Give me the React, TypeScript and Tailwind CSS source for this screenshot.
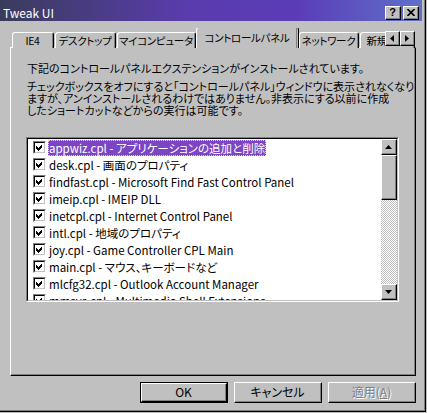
import React from 'react';

const rows = [
  'appwiz.cpl - アプリケーションの追加と削除',
  'desk.cpl - 画面のプロパティ',
  'findfast.cpl - Microsoft Find Fast Control Panel',
  'imeip.cpl - IMEIP DLL',
  'inetcpl.cpl - Internet Control Panel',
  'intl.cpl - 地域のプロパティ',
  'joy.cpl - Game Controller CPL Main',
  'main.cpl - マウス、キーボードなど',
  'mlcfg32.cpl - Outlook Account Manager',
  'mmsys.cpl - Multimedia Shell Extensions',
];

const Raised: React.FC<{ className?: string; children?: React.ReactNode }> = ({ className = '', children }) => (
  <div className={`border-t border-l border-white border-r border-b border-r-black border-b-black bg-[#c0c0c0] ${className}`}>
    <div className="w-full h-full border-r border-b border-[#808080] flex items-center justify-center">{children}</div>
  </div>
);

const Check: React.FC = () => (
  <div className="w-[13px] h-[13px] shrink-0 border-t border-l border-[#808080] border-r border-b border-r-white border-b-white">
    <div className="w-full h-full border-t border-l border-black border-r border-b border-r-[#c0c0c0] border-b-[#c0c0c0] bg-white flex items-center justify-center">
      <svg width="7" height="7" viewBox="0 0 7 7" shapeRendering="crispEdges">
        <path d="M0 2 L2 4 L6 0 L6 3 L2 7 L0 5 Z" fill="#000" />
      </svg>
    </div>
  </div>
);

const Tri: React.FC<{ dir: 'up' | 'down' | 'left' | 'right' }> = ({ dir }) => {
  const pts = {
    up: '0,4 7,4 3.5,0',
    down: '0,0 7,0 3.5,4',
    left: '4,0 4,7 0,3.5',
    right: '0,0 0,7 4,3.5',
  }[dir];
  const horiz = dir === 'up' || dir === 'down';
  return (
    <svg width={horiz ? 7 : 4} height={horiz ? 4 : 7} viewBox={horiz ? '0 0 7 4' : '0 0 4 7'}>
      <polygon points={pts} fill="#000" />
    </svg>
  );
};

const tabs = [
  { label: 'IE4', w: 'w-[42px]' },
  { label: 'デスクトップ', w: 'w-[61px]' },
  { label: 'マイコンピュータ', w: 'w-[79px]' },
  { label: 'コントロールパネル', w: 'w-[99px]', active: true },
  { label: 'ネットワーク', w: 'w-[60px]' },
  { label: '新規作成', w: 'w-[55px]' },
];

const App: React.FC = () => {
  return (
    <div className="w-[427px] h-[413px] bg-[#c0c0c0] overflow-hidden text-black text-[11px] font-['Noto_Sans_CJK_JP',sans-serif] [font-feature-settings:'palt'] leading-[12px]">
      <div className="w-[426px] h-[412px] border-r border-b border-black">
        <div className="w-full h-full border-r border-b border-[#808080] flex flex-col">
          {/* title bar */}
          <div className="h-[21px] mr-[2px] flex bg-[linear-gradient(90deg,#3a3c5c_0%,#5a3cae_45%,#5a3cb8_70%,#6070c8_100%)]">
            <div className="pl-[3px] pt-[7px] text-white text-[12px]">Tweak UI</div>
            <div className="ml-auto flex items-end pb-[1px] pr-[3px] gap-[2px]">
              <Raised className="w-[16px] h-[14px]">
                <span className="text-[11px] font-bold leading-[11px] font-['Liberation_Sans',sans-serif]">?</span>
              </Raised>
              <Raised className="w-[16px] h-[14px]">
                <svg width="8" height="7" viewBox="0 0 8 7">
                  <path d="M0.5 0 L7.5 7 M7.5 0 L0.5 7" stroke="#000" strokeWidth="1.6" />
                </svg>
              </Raised>
            </div>
          </div>

          {/* tabs + panel */}
          <div className="pl-[10px] pr-[8px] mt-[7px] flex flex-col">
            <div className="relative z-10 h-[20px] -mb-[1px] flex items-end gap-[1px] pl-[2px] overflow-hidden text-[10.5px] tracking-[-0.3px]">
              {tabs.map((t) => (
                <div
                  key={t.label}
                  className={`${t.w} shrink-0 ${t.active ? 'h-[20px] -mx-[1px] px-[1px] box-content' : 'h-[16px]'} border-t border-l border-white border-r border-r-black rounded-t-[3px] bg-[#c0c0c0] flex`}
                >
                  <div className="flex-1 border-r border-[#808080] flex items-center justify-center whitespace-nowrap overflow-hidden">
                    {t.label}
                  </div>
                </div>
              ))}
              <div className="absolute right-[1px] top-[3px] flex bg-[#c0c0c0]">
                <Raised className="w-[15px] h-[15px]"><Tri dir="left" /></Raised>
                <Raised className="w-[15px] h-[15px]"><Tri dir="right" /></Raised>
              </div>
            </div>

            <div className="h-[329px] border-t border-l border-white border-r border-b border-r-black border-b-black">
              <div className="w-full h-full border-r border-b border-[#808080] pl-[16px] pt-[14px] flex flex-col">
                <p className="whitespace-nowrap">下記のコントロールパネルエクステンションがインストールされています。</p>
                <p className="mt-[6px] leading-[12px] whitespace-nowrap">
                  チェックボックスをオフにすると「コントロールパネル」ウィンドウに表示されなくなり
                  <br />
                  ますが、アンインストールされるわけではありません。非表示にする以前に作成
                  <br />
                  したショートカットなどからの実行は可能です。
                </p>

                {/* listbox */}
                <div className="mt-[21px] -ml-[1px] w-[373px] h-[165px] border-t border-l border-[#808080] border-r border-b border-r-white border-b-white">
                  <div className="w-full h-full border-t border-l border-black border-r border-b border-r-[#c0c0c0] border-b-[#c0c0c0] bg-white flex">
                    <div className="flex-1 overflow-hidden text-[11.5px]">
                      {rows.map((r, i) => (
                        <div key={r} className="h-[17px] flex items-center pl-[5px] gap-[2px] whitespace-nowrap">
                          <Check />
                          <span
                            className={
                              i === 0
                                ? 'bg-[#7b45c4] text-white px-[1px] py-[2px] outline-1 outline-dotted outline-[#e8e070] -outline-offset-1'
                                : 'px-[1px]'
                            }
                          >
                            {r}
                          </span>
                        </div>
                      ))}
                    </div>
                    {/* scrollbar */}
                    <div className="w-[16px] flex flex-col">
                      <Raised className="h-[16px] shrink-0"><Tri dir="up" /></Raised>
                      <Raised className="h-[45px] shrink-0" />
                      <div className="flex-1 [background-image:repeating-conic-gradient(#c0c0c0_0%_25%,#ffffff_0%_50%)] [background-size:2px_2px]" />
                      <Raised className="h-[16px] shrink-0"><Tri dir="down" /></Raised>
                    </div>
                  </div>
                </div>
              </div>
            </div>

            {/* buttons */}
            <div className="mt-[6px] flex justify-end gap-[6px] text-[12px]">
              <div className="w-[88px] h-[21px] border border-black">
                <Raised className="w-full h-full">OK</Raised>
              </div>
              <Raised className="w-[88px] h-[21px]">キャンセル</Raised>
              <Raised className="w-[88px] h-[21px]">
                <span className="text-[#808080] [text-shadow:1px_1px_0_#ffffff]">
                  適用(<span className="underline">A</span>)
                </span>
              </Raised>
            </div>
          </div>
        </div>
      </div>
    </div>
  );
};

export default App;
